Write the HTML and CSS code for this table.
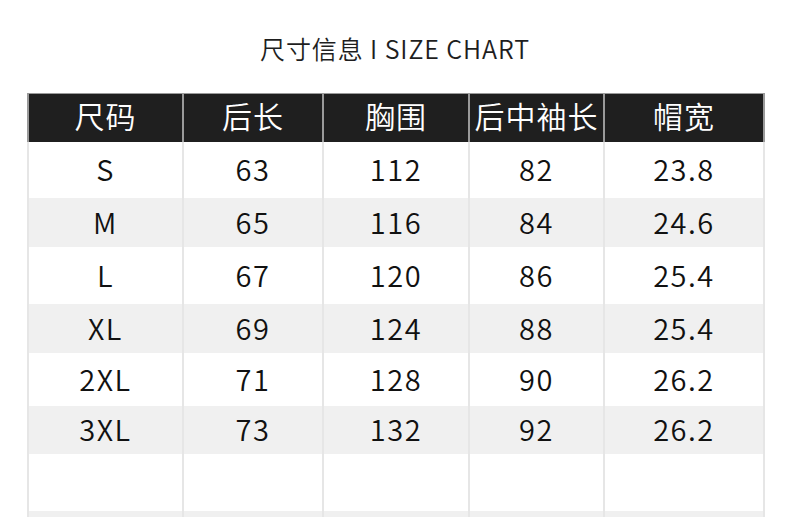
FILE: index.html
```html
<!DOCTYPE html>
<html lang="zh">
<head>
<meta charset="utf-8">
<link rel="stylesheet" href="styles.css">
</head>
<body>
<div class="page">
  <h1 class="title">尺寸信息 I SIZE CHART</h1>
  <table class="chart">
    <colgroup>
      <col class="c1"><col class="c2"><col class="c3"><col class="c4"><col class="c5">
    </colgroup>
    <thead>
      <tr class="head"><th>尺码</th><th>后长</th><th>胸围</th><th>后中袖长</th><th>帽宽</th></tr>
    </thead>
    <tbody>
      <tr class="r1"><td>S</td><td>63</td><td>112</td><td>82</td><td>23.8</td></tr>
      <tr class="r2 alt"><td>M</td><td>65</td><td>116</td><td>84</td><td>24.6</td></tr>
      <tr class="r3"><td>L</td><td>67</td><td>120</td><td>86</td><td>25.4</td></tr>
      <tr class="r4 alt"><td>XL</td><td>69</td><td>124</td><td>88</td><td>25.4</td></tr>
      <tr class="r5"><td>2XL</td><td>71</td><td>128</td><td>90</td><td>26.2</td></tr>
      <tr class="r6 alt"><td>3XL</td><td>73</td><td>132</td><td>92</td><td>26.2</td></tr>
      <tr class="r7"><td></td><td></td><td></td><td></td><td></td></tr>
      <tr class="r8 alt"><td></td><td></td><td></td><td></td><td></td></tr>
    </tbody>
  </table>
</div>
</body>
</html>
```
FILE: styles.css
```css
html, body {
  margin: 0;
  padding: 0;
  background: #ffffff;
}
body {
  font-family: "Noto Sans CJK SC", "Noto Sans", sans-serif;
  color: #1a1a1a;
  width: 790px;
  height: 525px;
  overflow: hidden;
}
.page {
  padding: 0 27px 0 27px;
}
.title {
  margin: 0;
  height: 93px;
  box-sizing: border-box;
  padding-top: 30px;
  font-size: 25px;
  font-weight: 350;
  line-height: 36px;
  letter-spacing: 0.9px;
  text-align: center;
  color: #1e1e1e;
}
.chart {
  width: 736px;
  border-collapse: collapse;
  table-layout: fixed;
}
.c1 { width: 155px; }
.c2 { width: 140px; }
.c3 { width: 146px; }
.c4 { width: 135px; }
.c5 { width: 160px; }
.chart th, .chart td {
  padding: 0;
  text-align: center;
  vertical-align: middle;
  border-left: 2px solid #e6e6e6;
  border-right: 2px solid #e6e6e6;
}
.head th {
  height: 48px;
  box-sizing: border-box;
  padding-bottom: 6px;
  background: #1f1f1f;
  color: #ffffff;
  font-size: 30px;
  font-weight: 350;
  line-height: 40px;
  letter-spacing: 1px;
  border-left: 2px solid #9a9a9a;
  border-right: 2px solid #9a9a9a;
  border-top: 1px solid #9a9a9a;
}
.chart td {
  box-sizing: border-box;
  padding-bottom: 3px;
  font-size: 29px;
  font-weight: 350;
  line-height: 36px;
  letter-spacing: 1.5px;
  color: #111;
}
.alt td { background: #f0f0f0; }
.r1 td { height: 56px; }
.r2 td { height: 49px; }
.r3 td { height: 57px; }
.r4 td { height: 49px; }
.r5 td { height: 53px; }
.r6 td { height: 48px; }
.r7 td { height: 57px; padding-bottom: 0; }
.r8 td { height: 6px; padding-bottom: 0; }
```
